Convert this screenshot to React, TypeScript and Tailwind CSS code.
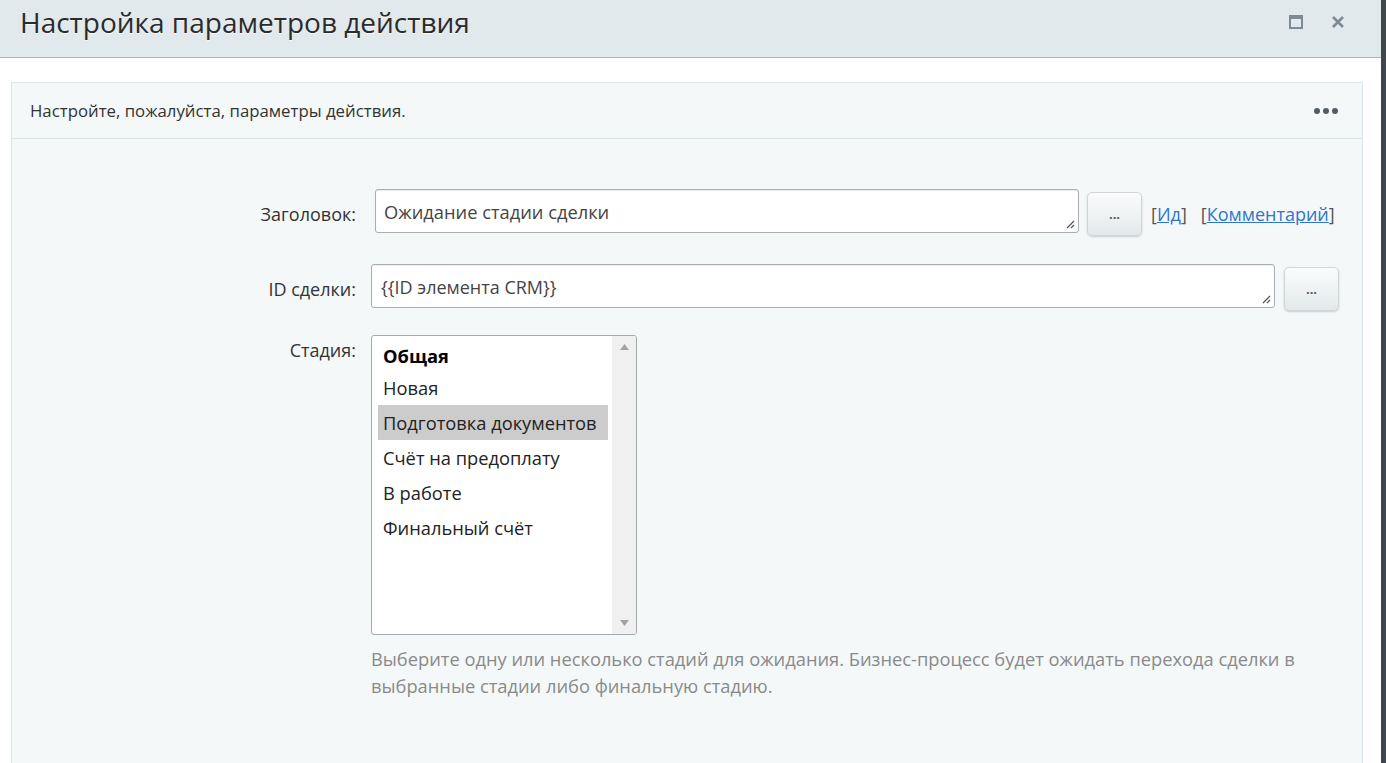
import React from "react";

const stages = [
  { name: "Общая", bold: true },
  { name: "Новая" },
  { name: "Подготовка документов", selected: true },
  { name: "Счёт на предоплату" },
  { name: "В работе" },
  { name: "Финальный счёт" },
];

const Grip: React.FC = () => (
  <svg className="absolute right-[3px] bottom-[3px]" width="10" height="10" viewBox="0 0 10 10">
    <path d="M9 2 L2 9 M9 6 L6 9" stroke="#555" strokeWidth="1.2" />
  </svg>
);

const DotsButton: React.FC<{ className?: string }> = ({ className = "" }) => (
  <button
    className={`h-[44px] w-[55px] shrink-0 rounded-[5px] border border-[#cfd6d9] bg-gradient-to-b from-[#fbfcfc] to-[#e3e9eb] shadow-[0_1px_2px_rgba(0,0,0,0.18)] text-[13px] font-bold leading-none text-[#555] ${className}`}
  >
    ...
  </button>
);

export default function App() {
  return (
    <div className="flex h-[763px] w-[1386px] overflow-hidden bg-[#3d474d] font-['Open_Sans','Noto_Sans',sans-serif]">
      <div className="flex w-[1381px] flex-col bg-white">
        {/* Title bar */}
        <div className="flex h-[58px] shrink-0 items-center justify-between border-b border-[#aeb5b8] bg-[#e1e9ec] pb-[13px] pl-[20px] pr-[36px]">
          <h1 className="text-[28px] font-normal text-[#2b2b2b] [text-shadow:0_1px_0_rgba(255,255,255,0.8)]">
            Настройка параметров действия
          </h1>
          <div className="flex items-center gap-[28px]">
            <svg width="14" height="14" viewBox="0 0 14 14">
              <rect x="1" y="1" width="12" height="12" fill="none" stroke="#7c8a96" strokeWidth="2" />
              <rect x="1" y="1" width="12" height="3" fill="#7c8a96" />
            </svg>
            <svg width="14" height="14" viewBox="0 0 14 14">
              <path d="M2 2 L12 12 M12 2 L2 12" stroke="#7c8a96" strokeWidth="2.6" />
            </svg>
          </div>
        </div>

        {/* Content */}
        <div className="flex flex-1 flex-col pt-[24px] pl-[11px] pr-[18px]">
          <div className="flex flex-1 flex-col border border-b-0 border-[#dbe6ea] bg-[#f4f8f9]">
            <div className="flex h-[56px] shrink-0 items-center justify-between border-b border-[#dbe6ea] pl-[18px] pr-[24px]">
              <span className="text-[16.8px] text-[#333]">Настройте, пожалуйста, параметры действия.</span>
              <div className="flex gap-[3px]">
                <span className="h-[6px] w-[6px] rounded-full bg-[#535c63]" />
                <span className="h-[6px] w-[6px] rounded-full bg-[#535c63]" />
                <span className="h-[6px] w-[6px] rounded-full bg-[#535c63]" />
              </div>
            </div>

            <div className="flex flex-col pt-[50px]">
              {/* Заголовок */}
              <div className="flex items-start">
                <label className="w-[344px] shrink-0 pt-[12px] text-right text-[18px] leading-[27px] text-[#333]">
                  Заголовок:
                </label>
                <div className="relative ml-[19px] h-[44px] w-[704px] rounded-[3px] border border-[#a9aeb1] bg-white px-[8px] pt-[10px] text-[18.3px] leading-[24px] text-[#444] shadow-[inset_0_1px_1px_rgba(0,0,0,0.08)]">
                  Ожидание стадии сделки
                  <Grip />
                </div>
                <DotsButton className="ml-[8px] mt-[3px]" />
                <div className="ml-[9px] mt-[12px] flex gap-[14px] text-[18px] leading-[27px] text-[#555]">
                  <span>
                    [<a className="text-[#2d75d0] underline">Ид</a>]
                  </span>
                  <span>
                    [<a className="text-[#2d75d0] underline">Комментарий</a>]
                  </span>
                </div>
              </div>

              {/* ID сделки */}
              <div className="mt-[28px] flex items-start">
                <label className="w-[344px] shrink-0 pt-[12px] text-right text-[18px] leading-[27px] text-[#333]">
                  ID сделки:
                </label>
                <div className="relative ml-[15px] h-[44px] w-[904px] rounded-[3px] border border-[#a9aeb1] bg-white px-[9px] pt-[10px] text-[18px] leading-[24px] text-[#444] shadow-[inset_0_1px_1px_rgba(0,0,0,0.08)]">
                  {"{{ID элемента CRM}}"}
                  <Grip />
                </div>
                <DotsButton className="ml-[9px] mt-[3px]" />
              </div>

              {/* Стадия */}
              <div className="mt-[24px] flex items-start">
                <label className="w-[344px] shrink-0 pt-[2px] text-right text-[18px] leading-[27px] text-[#333]">
                  Стадия:
                </label>
                <div className="ml-[15px] flex flex-col">
                  <div className="flex h-[300px] w-[266px] overflow-hidden rounded-[3px] border border-[#a5a9ac] bg-white">
                    <ul className="flex-1 pt-[6px] pl-[6px] pr-[4px]">
                      {stages.map((s) => (
                        <li
                          key={s.name}
                          className={`px-[5px] text-[18.3px] ${
                            s.bold ? "h-[28px] font-bold leading-[28px] text-black" : "h-[35px] leading-[35px] text-[#222]"
                          } ${s.selected ? "bg-[#cccccc]" : ""}`}
                        >
                          {s.name}
                        </li>
                      ))}
                    </ul>
                    <div className="flex w-[24px] flex-col items-center justify-between bg-[#f0f0f0] py-[8px]">
                      <svg width="9" height="6" viewBox="0 0 9 6">
                        <path d="M0 6 L4.5 0 L9 6 Z" fill="#a3a3a3" />
                      </svg>
                      <svg width="9" height="6" viewBox="0 0 9 6">
                        <path d="M0 0 L4.5 6 L9 0 Z" fill="#a3a3a3" />
                      </svg>
                    </div>
                  </div>
                  <p className="mt-[10px] w-[960px] text-[18.3px] leading-[27px] text-[#8a8a8a]">
                    Выберите одну или несколько стадий для ожидания. Бизнес-процесс будет ожидать перехода сделки в
                    выбранные стадии либо финальную стадию.
                  </p>
                </div>
              </div>
            </div>
          </div>
        </div>
      </div>
    </div>
  );
}
